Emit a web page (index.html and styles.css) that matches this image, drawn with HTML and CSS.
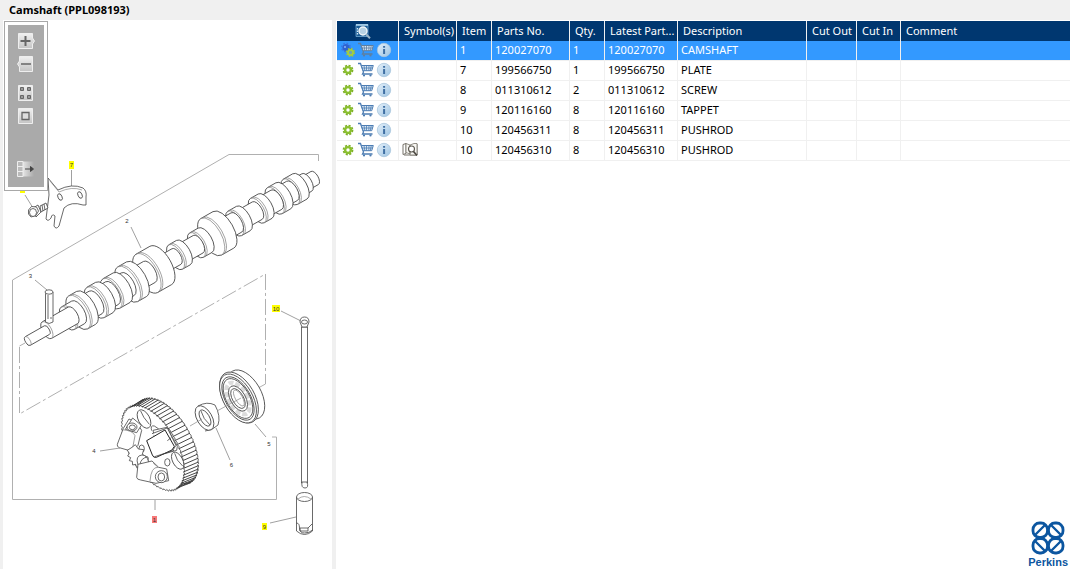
FILE: index.html
```html
<!DOCTYPE html>
<html lang="en">
<head>
<meta charset="utf-8">
<title>Camshaft (PPL098193)</title>
<link rel="stylesheet" href="styles.css">
</head>
<body>
<svg class="sprite" aria-hidden="true">
  <defs>
    <linearGradient id="infoFill" x1="0" y1="0" x2="1" y2="1"><stop offset="0" stop-color="#e6f1fa"/><stop offset="1" stop-color="#9cc3e2"/></linearGradient>
    <linearGradient id="keyFill" x1="0" y1="0" x2="0" y2="1"><stop offset="0" stop-color="#f0f0f0"/><stop offset="1" stop-color="#c4c4c4"/></linearGradient>
    <linearGradient id="fadeFill" x1="0" y1="0" x2="1" y2="0"><stop offset="0" stop-color="#e4e4e4"/><stop offset="1" stop-color="#aaa"/></linearGradient>
  </defs>
  <symbol id="gear" viewBox="0 0 16 16">
    <circle cx="8" cy="8" r="4.500" fill="none" stroke="#7fb02a" stroke-width="1.800" stroke-dasharray="2.100 1.434"/>
    <circle cx="8" cy="8" r="2.900" fill="none" stroke="#8abf2e" stroke-width="2.400"/>
  </symbol>
  <symbol id="gears" viewBox="0 0 16 16">
    <circle cx="6" cy="5.500" r="3.600" fill="#2e62d0"/>
    <circle cx="6" cy="5.500" r="4.200" fill="none" stroke="#3c74de" stroke-width="1.600" stroke-dasharray="1.700 1.600"/>
    <circle cx="5" cy="5" r="1" fill="#8db6f5"/>
    <circle cx="10.500" cy="10.500" r="3.900" fill="none" stroke="#9fc43c" stroke-width="1.600" stroke-dasharray="1.600 1.460"/>
    <circle cx="10.500" cy="10.500" r="2.600" fill="#6fa5b0" stroke="#a6d03a" stroke-width="1.800"/>
  </symbol>
  <symbol id="cart" viewBox="0 0 16 16">
    <path d="M0 1.500h2.500l3 8.500-1 2h10" fill="none" stroke="currentColor" stroke-width="1.300"/>
    <path d="M3.300 3.500h12l-1.600 5.200H5.200z" fill="#dbe8f5" stroke="currentColor"/>
    <path d="M6 3.500l.8 5M8.500 3.500v5M11 3.500l-.2 5M13.300 3.500l-1 5M4 6h10.500" fill="none" stroke="currentColor" stroke-width=".8"/>
    <circle cx="6" cy="13.500" r="1.100" fill="currentColor"/><circle cx="12.500" cy="13.500" r="1.100" fill="currentColor"/>
  </symbol>
  <symbol id="info" viewBox="0 0 16 16">
    <circle cx="8" cy="8" r="6.700" fill="url(#infoFill)" stroke="#a9c6dd" stroke-width=".8"/>
    <path d="M7.100 4h2v1.800h-2zM7.100 7h2v5h-2z" fill="#3f6fa3"/>
  </symbol>
  <symbol id="book" viewBox="0 0 16 16">
    <path d="M1 2.500l3-1v10l-3 1zM15 2v11H2" fill="#fff" stroke="#77736a"/>
    <path d="M4 1.500l4 1.500v9l-4-1.500zM8 3l4-1.500h3V13H8z" fill="#f7f6f2" stroke="#77736a" stroke-width=".8"/>
    <circle cx="9.500" cy="7" r="3" fill="#fff" stroke="#5c5850" stroke-width="1.100"/>
    <path d="M11.500 9.500l3.500 4" stroke="#4a463f" stroke-width="1.700"/>
  </symbol>
  <symbol id="lookup" viewBox="0 0 16 16">
    <path d="M1 1.500h12v12H1z" fill="#1c5d96" stroke="#7fb6dc" stroke-width=".7"/>
    <path d="M1 2h12" stroke="#b9dcf2" stroke-width="1.500"/>
    <path d="M2.500 5v7" stroke="#d8ebf7" stroke-width="1.300" stroke-dasharray="1.500 1"/>
    <circle cx="8" cy="8" r="4" fill="#b8d2e4" stroke="#f2f7fa" stroke-width="1.400"/>
    <path d="M11 11.300l4 4" stroke="#9bb5c8" stroke-width="2"/>
  </symbol>
</svg>

<header class="titlebar"><h1>Camshaft (PPL098193)</h1></header>
<main class="workspace">
  <section class="viewer" aria-label="Drawing">
    <svg class="drawing" viewBox="3 20 329 549" role="img" aria-label="Exploded camshaft drawing">
      <g class="leader">
        <path d="M155 499v11M131 227l10 21M35 280l12 10M71.500 170v16M25 195l8 13M281 311l20 10M270 523l26-6M100 451l20-3M255 424l11 13M216 428l14 32"/>
      </g>
      <g class="frame">
        <path d="M318.500 161v-6.500H229L12.500 280v219.500h264V437H272"/>
        <path class="chain" d="M19.500 347v67L265.500 274v110"/>
        <path d="M25 343l-5.500 3M265.500 384l-11 6"/>
      </g>
      <g id="shaft" class="ink" transform="translate(26 342) rotate(-29.600)"></g>
      <g class="ink">
        <path d="M45.500 292v30q3.500 3 7.500 0v-30q-4 3-7.500 0z"/><ellipse cx="49" cy="292" rx="4" ry="2.200"/><path d="M48 295v24M51 317v2"/>
        <path d="M48 178l10 12q14-7 25-2q4 3 3 9v8h-3q-12-4-19 3l-5 18q-3 4-5 0l1-10q-3-3-4 2q-3 4-5 1l3-24z"/>
        <path class="soft" d="M50 181l9 11q13-6 23-2"/>
        <ellipse cx="60" cy="197" rx="2" ry="3.500" transform="rotate(-25 60 197)"/><ellipse cx="80" cy="195" rx="2" ry="3.500" transform="rotate(-25 80 195)"/>
        <path d="M33 208l5-3 3 7-5 5z"/><path d="M40 206l6-3 2 5-7 4z"/><path d="M42 205l1 6M44 204l1 6"/>
        <path d="M28.500 210l3-3.500 5 .5 2 4-2.500 4.500-5 1.500-2.500-3z"/><ellipse cx="33" cy="212.500" rx="3.500" ry="4"/>
      </g>
      <g id="gearwheel" class="ink"></g>
      <g class="ink zoomed" transform="translate(90 360) scale(.33333)">
        <ellipse cx="162" cy="177" rx="17" ry="30" transform="rotate(-28 162 177)"/><path d="M152 153q6 18 26 40"/>
        <ellipse cx="263" cy="302" rx="15" ry="28" transform="rotate(-28 263 302)"/><path d="M254 280q5 22 24 38"/>
        <ellipse cx="155" cy="266" rx="8" ry="11"/><ellipse cx="232" cy="307" rx="8" ry="11"/><path d="M185 212q-5-17 8-14l12 8-7 10"/>
        <path d="M100 205l-18 48q-2 7 6 10l38 11 18-18 11-45-15-23-23-11z"/>
        <path d="M128 174l26 22-14 22-34-10z"/><ellipse cx="126" cy="201" rx="15" ry="12"/><ellipse cx="127" cy="202" rx="9" ry="7"/>
        <path class="soft" d="M95 209q34 2 40 18l-8 42"/>
        <path d="M126 262l10-8 9 13 16 2-4 14 18 10-2 15-20 20-6-10-7 5-3-10-9 2-1-11-9-2 4-9-9-5 5-8-6-9z"/>
        <path d="M144 315q-9-28 12-30 17 0 21 27l-26 6"/><path d="M150 315q2-22 24-24"/>
        <path d="M144 313l-4 39q1 7 12 8l46 10 38-8-6-35-24-5-20-19z"/>
        <path class="soft" d="M204 322q-21-2-24 42M190 310l15 12"/>
        <circle cx="214" cy="350" r="18"/><ellipse cx="214" cy="351" rx="10" ry="12"/>
        <path d="M189 211l42-9 31 57-2 12-54 15z"/><path d="M186 221l46-17 26 52-9 14"/>
        <path class="dark" d="M170 242l55-32 28 49-7 11-47 22q-9 2-12-7z"/><path class="edge" d="M194 290l58-19M232 242l12-9"/>
      </g>
      <g class="ink">
        <ellipse cx="246" cy="394.500" rx="15" ry="27" transform="rotate(-30 246 394.500)"/>
        <ellipse cx="239" cy="397.500" rx="15.500" ry="28" transform="rotate(-30 239 397.500)"/>
        <g transform="translate(238 398.500) rotate(-30)">
          <ellipse rx="14.500" ry="27"/><ellipse rx="12.500" ry="24"/><ellipse rx="11.500" ry="22"/>
          <ellipse class="balls" rx="9" ry="17.500"/><ellipse rx="7.500" ry="14"/><ellipse rx="5.500" ry="11"/><ellipse class="soft" cx="1" rx="3.500" ry="9"/>
        </g>
        <path d="M198 406q9-5 17-1 6 11 3 20-6 6-13 6"/>
        <ellipse cx="204.500" cy="418" rx="7.500" ry="13.500" transform="rotate(-30 204.500 418)"/>
        <ellipse cx="205" cy="418" rx="4.500" ry="9" transform="rotate(-30 205 418)"/><path d="M201 411q2 8 9 14"/>
        <path class="soft" d="M190 426l12-7M217 411l24-13"/>
        <path d="M301.500 327h6v156h-6z"/><path d="M300 322q0-5 4.500-5t4.500 5l-2 5h-5z"/><ellipse cx="304.500" cy="322" rx="3" ry="2"/>
        <path d="M302 482q-1 6 3 6t2-6z"/>
        <path d="M296.500 497v34q8 7 16 0v-34"/><ellipse cx="304.500" cy="497" rx="8" ry="4.500"/><path class="soft" d="M298 499q6-5 13 0"/>
        <path class="edge" d="M296.500 523q3 0 3 5t5 5 8-3M300 528h8v3h-8zM308 528l4-4"/>
      </g>
      <g class="mark"><path d="M69 161h5v8h-5zM272 305h8v7h-8zM262 523h5v7h-5zM20 186h5v7h-5z"/><path class="hot" d="M152 516h5v7h-5z"/></g>
      <g class="callout">
        <text x="71.500" y="167">7</text><text x="276" y="311">10</text><text x="264.500" y="529">9</text><text x="154.500" y="522">1</text><text x="22.500" y="191">8</text>
        <text x="127" y="223">2</text><text x="30.500" y="278">3</text><text x="94" y="453">4</text><text x="269" y="446">5</text><text x="231.500" y="467">6</text>
      </g>
    </svg>
    <div class="toolbar" role="toolbar" aria-label="View">
      <div class="tools">
        <button type="button" aria-label="Zoom in"><svg viewBox="0 0 18 16"><path d="M1.500.5h14V5l2 3-2 3v4.500h-14z" fill="url(#keyFill)" stroke="#eee"/><path d="M8.500 3v10M3.500 8h10" stroke="#666" stroke-width="2"/></svg></button>
        <button type="button" aria-label="Zoom out"><svg viewBox="0 0 18 16"><path d="M2.500.5h13v15h-13V11l-2-3 2-3z" fill="url(#keyFill)" stroke="#eee"/><path d="M4 8h10" stroke="#666" stroke-width="1.500"/></svg></button>
        <button type="button" class="apart" aria-label="Fit all"><svg viewBox="0 0 18 16"><path d="M1.500.5h14v15h-14z" fill="url(#keyFill)" stroke="#eee"/><path d="M3.500 2.500h3v3h-3zM10.500 2.500h3v3h-3zM3.500 10.500h3v3h-3zM10.500 10.500h3v3h-3z" fill="#999" stroke="#666"/></svg></button>
        <button type="button" aria-label="Actual size"><svg viewBox="0 0 18 16"><path d="M1.500.5h14v15h-14z" fill="url(#keyFill)" stroke="#eee"/><path d="M5 4.500h7v7H5z" fill="#ddd" stroke="#666" stroke-width="1.300"/></svg></button>
        <button type="button" class="last" aria-label="Toggle panel"><svg viewBox="0 0 18 16"><path d="M6 .5h11v15H6z" fill="url(#fadeFill)"/><path d="M.5.500H6v15H.5zM.5 5.500H6M.5 10.500H6" fill="#bbb" stroke="#eee"/><path d="M8 8h6M13.500 5.500l3 2.500-3 2.500z" fill="#444" stroke="#444"/></svg></button>
      </div>
    </div>
  </section>

  <section class="parts" aria-label="Parts list">
    <table class="grid">
      <colgroup><col class="c-tools"><col class="c-symbol"><col class="c-short"><col class="c-part"><col class="c-short"><col class="c-latest"><col class="c-desc"><col class="c-out"><col class="c-in"><col></colgroup>
      <thead>
        <tr><th class="lookup"><button type="button" aria-label="Search list"><svg><use href="#lookup"/></svg></button></th><th>Symbol(s)</th><th>Item</th><th>Parts No.</th><th>Qty.</th><th>Latest Part...</th><th>Description</th><th>Cut Out</th><th>Cut In</th><th>Comment</th></tr>
      </thead>
      <tbody>
        <tr class="selected"><td><div class="actions"><button type="button" aria-label="Assembly"><svg><use href="#gears"/></svg></button><button type="button" aria-label="Add to cart"><svg><use href="#cart"/></svg></button><button type="button" aria-label="Information"><svg><use href="#info"/></svg></button></div></td><td></td><td>1</td><td>120027070</td><td>1</td><td>120027070</td><td>CAMSHAFT</td><td></td><td></td><td></td></tr>
        <tr><td><div class="actions"><button type="button" aria-label="Part"><svg><use href="#gear"/></svg></button><button type="button" aria-label="Add to cart"><svg><use href="#cart"/></svg></button><button type="button" aria-label="Information"><svg><use href="#info"/></svg></button></div></td><td></td><td>7</td><td>199566750</td><td>1</td><td>199566750</td><td>PLATE</td><td></td><td></td><td></td></tr>
        <tr><td><div class="actions"><button type="button" aria-label="Part"><svg><use href="#gear"/></svg></button><button type="button" aria-label="Add to cart"><svg><use href="#cart"/></svg></button><button type="button" aria-label="Information"><svg><use href="#info"/></svg></button></div></td><td></td><td>8</td><td>011310612</td><td>2</td><td>011310612</td><td>SCREW</td><td></td><td></td><td></td></tr>
        <tr><td><div class="actions"><button type="button" aria-label="Part"><svg><use href="#gear"/></svg></button><button type="button" aria-label="Add to cart"><svg><use href="#cart"/></svg></button><button type="button" aria-label="Information"><svg><use href="#info"/></svg></button></div></td><td></td><td>9</td><td>120116160</td><td>8</td><td>120116160</td><td>TAPPET</td><td></td><td></td><td></td></tr>
        <tr><td><div class="actions"><button type="button" aria-label="Part"><svg><use href="#gear"/></svg></button><button type="button" aria-label="Add to cart"><svg><use href="#cart"/></svg></button><button type="button" aria-label="Information"><svg><use href="#info"/></svg></button></div></td><td></td><td>10</td><td>120456311</td><td>8</td><td>120456311</td><td>PUSHROD</td><td></td><td></td><td></td></tr>
        <tr><td><div class="actions"><button type="button" aria-label="Part"><svg><use href="#gear"/></svg></button><button type="button" aria-label="Add to cart"><svg><use href="#cart"/></svg></button><button type="button" aria-label="Information"><svg><use href="#info"/></svg></button></div></td><td><div class="actions"><button type="button" aria-label="Open reference"><svg><use href="#book"/></svg></button></div></td><td>10</td><td>120456310</td><td>8</td><td>120456310</td><td>PUSHROD</td><td></td><td></td><td></td></tr>
      </tbody>
    </table>
    <div class="brand">
      <svg viewBox="0 0 34 34" aria-hidden="true">
        <g fill="none" stroke="currentColor" stroke-width="2.800"><rect x="2" y="2" width="14.500" height="14.500" rx="6.500"/><rect x="17.500" y="2" width="14.500" height="14.500" rx="6.500"/><rect x="2" y="17.500" width="14.500" height="14.500" rx="6.500"/><rect x="17.500" y="17.500" width="14.500" height="14.500" rx="6.500"/>
        <path d="M4 14L14 4M20 4l10 10M4 20l10 10M20 30l10-10" stroke-width="2.400"/></g>
      </svg>
      <span>Perkins</span>
    </div>
  </section>
</main>
<script src="drawing.js"></script>
</body>
</html>
```

FILE: styles.css
```css
* { box-sizing: border-box; }
body {
  margin: 0;
  min-height: 100vh;
  display: flex;
  flex-direction: column;
  background: #f0f0f0;
  color: #000;
  font: 11px/16px "Noto Sans", "Open Sans", sans-serif;
}
button { display: block; padding: 0; border: 0; background: none; color: inherit; font: inherit; }
button svg { display: block; width: 16px; height: 16px; }
.sprite { position: absolute; width: 0; height: 0; }

.titlebar { height: 20px; padding: 2px 9px; }
.titlebar h1 { margin: 0; font-size: 11px; line-height: 16px; font-weight: 700; }

.workspace { flex: 1; display: flex; gap: 4px; padding-left: 3px; }
.viewer { position: relative; flex: 0 0 329px; background: #fff; }
.drawing { display: block; width: 100%; }

.ink path, .ink ellipse, .ink circle { fill: #fff; stroke: #444; stroke-width: .8; }
.ink .soft { fill: none; stroke: #888; stroke-width: .7; }
.ink .edge { fill: none; }
.ink .teeth { fill: none; stroke: #333; stroke-width: .9; }
.ink .balls { stroke: #888; stroke-width: 4; stroke-dasharray: 5 2; stroke-opacity: .3; }
.ink.zoomed path, .ink.zoomed ellipse, .ink.zoomed circle { stroke-width: 2.4; }
.ink.zoomed .dark { stroke: #222; stroke-width: 3; }
.leader path { fill: none; stroke: #888; stroke-width: .8; }
.frame path { fill: none; stroke: #b0b0b0; stroke-width: 1; }
.frame .chain { stroke-dasharray: 16 3 3 3; }
.mark path { fill: #ffff00; }
.mark .hot { fill: #f87878; }
.callout text { fill: #333; font: 6px "Liberation Sans", sans-serif; text-anchor: middle; }

.toolbar { position: absolute; left: 1px; top: 1px; padding: 3px; background: #fff; border: 1px solid #a8a8a8; }
.tools { display: flex; flex-direction: column; gap: 7px; padding: 8px 9px 10px 9px; background: #aaa; }
.tools svg { width: 18px; }
.tools .apart { margin-top: 6px; }
.tools .last { margin-top: 30px; }

.parts { flex: 1; min-width: 0; display: flex; flex-direction: column; padding: 1px 0 0 1px; background: #fff; }
.grid { width: 100%; table-layout: fixed; border-collapse: separate; border-spacing: 0; }
.c-tools { width: 62px; }
.c-symbol { width: 58px; }
.c-short { width: 35px; }
.c-part { width: 78px; }
.c-latest { width: 73px; }
.c-desc { width: 129px; }
.c-out { width: 50px; }
.c-in { width: 44px; }
.grid th {
  height: 20px;
  padding: 0 0 0 5px;
  background: #003770;
  color: #fff;
  border-right: 1px solid #f0f0f0;
  font-weight: 400;
  text-align: left;
  white-space: nowrap;
}
.grid .lookup { padding-left: 18px; }
.grid td {
  height: 20px;
  padding: 0 0 2px 3px;
  border-right: 1px solid #f0f0f0;
  border-bottom: 1px solid #f0f0f0;
  white-space: nowrap;
}
.grid th:last-child, .grid td:last-child { border-right: 0; }
.grid .selected td { background: #3399ff; color: #fff; }
.actions { display: flex; gap: 2px; color: #4d7db3; }
.selected .actions { color: #5f7f9f; }

.brand { margin: auto 2px 0 auto; display: flex; flex-direction: column; align-items: center; color: #0c56a0; }
.brand svg { display: block; width: 34px; height: 34px; }
.brand span { font: bold 11px/14px "Liberation Sans", sans-serif; }
```

FILE: drawing.js
```javascript
const NS = "http://www.w3.org/2000/svg";
function addPath(parent, d, cls) {
  const p = document.createElementNS(NS, "path");
  p.setAttribute("d", d);
  if (cls) p.setAttribute("class", cls);
  parent.appendChild(p);
}

// Camshaft sections along the shaft axis: [start, end, radius], near end first
const sections = [
  [2, 24, 5], [24, 54, 9.5], [48, 60, 13], [60, 69, 19], [68, 80, 13], [80, 90, 17.5],
  [88, 99, 13], [98, 110, 17], [108, 117, 13], [117, 127, 20], [126, 142, 12],
  [139, 155, 22], [153, 173, 9], [172, 181, 14], [179, 198, 10], [196, 206, 14],
  [213, 227, 21], [225, 242, 11], [240, 250, 14], [250, 266, 10], [266, 275, 14],
  [273, 288, 11], [286, 296, 15], [294, 306, 11], [304, 315, 14.5], [314, 323, 10], [321, 332, 7.5]
];
const shaft = document.getElementById("shaft");
sections.slice().reverse().forEach(([a, b, r]) => {
  const k = r * 0.48;
  addPath(shaft, `M${a} ${-r}L${b} ${-r}A${k} ${r} 0 0 1 ${b} ${r}L${a} ${r}A${k} ${r} 0 0 1 ${a} ${-r}z`);
  addPath(shaft, `M${a} ${-r}A${k} ${r} 0 0 1 ${a} ${r}`, "soft");
  if (r > 12) addPath(shaft, `M${a + 2} ${-r}A${k} ${r} 0 0 1 ${a + 2} ${r}`, "soft");
});

// Toothed wheel: front face ellipse extruded along the shaft direction
const wheel = document.getElementById("gearwheel");
const tilt = -Math.PI / 6;
function rim(t, scale, dx, dy) {
  const x = 24 * scale * Math.cos(t), y = 48 * scale * Math.sin(t);
  return [(153 + dx + x * Math.cos(tilt) - y * Math.sin(tilt)).toFixed(1),
          (448 + dy + x * Math.sin(tilt) + y * Math.cos(tilt)).toFixed(1)];
}
const teeth = 64;
function outline(dx, dy) {
  let d = "";
  for (let i = 0; i < teeth * 2; i++) {
    const [x, y] = rim(i * Math.PI / teeth, i % 2 ? 1 : 0.965, dx, dy);
    d += (i ? "L" : "M") + x + " " + y;
  }
  return d + "z";
}
addPath(wheel, outline(14, -7));
addPath(wheel, outline(0, 0));
for (let i = -16; i <= 16; i++) {
  const t = i * 2 * Math.PI / teeth;
  const [x, y] = rim(t, 0.97, 0, 0), [p, q] = rim(t, 1, 14, -7);
  addPath(wheel, `M${x} ${y}L${p} ${q}`, "teeth");
}
```
